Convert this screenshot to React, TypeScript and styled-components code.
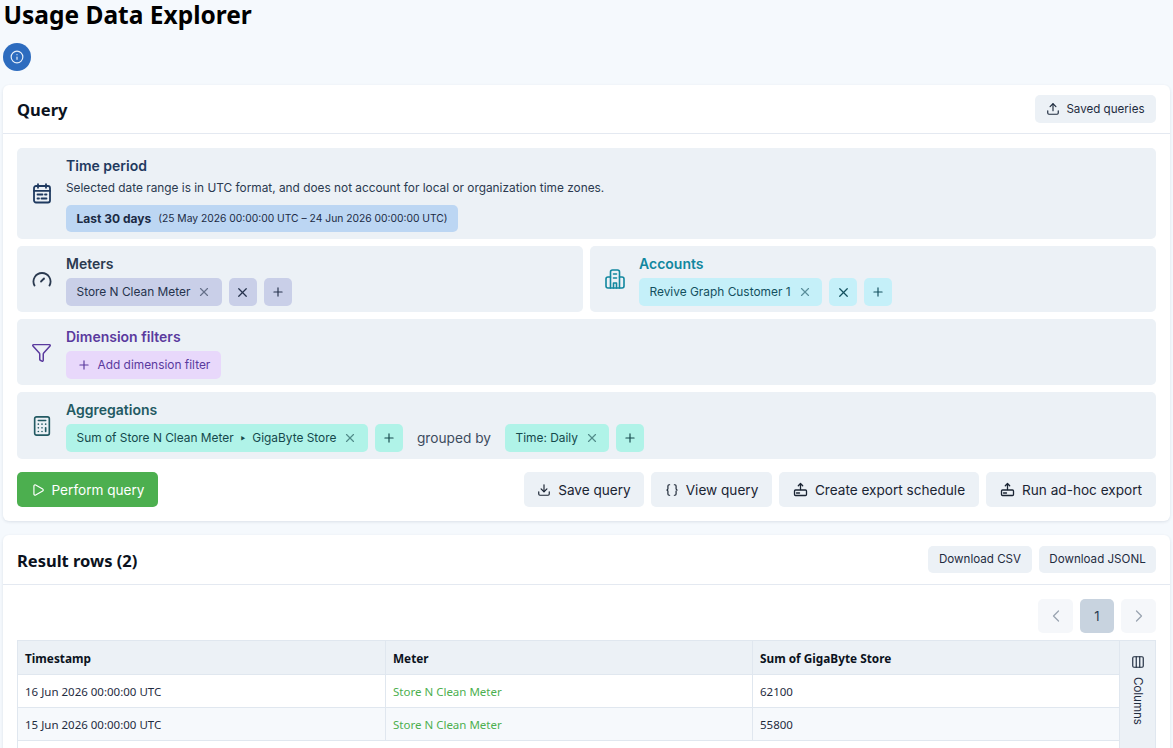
import React from "react";
import styled, { createGlobalStyle } from "styled-components";
import { Info, Upload, Funnel, Calculator, Play, Download, Braces, X, Plus, ChevronLeft, ChevronRight, Columns3 } from "lucide-react";

const Global = createGlobalStyle`
  html, body { margin: 0; padding: 0; height: 748px; overflow: hidden; background: #f5f9fd; }
  body { font-family: "Inter", "Noto Sans", sans-serif; color: #1a2433; }
`;

const Page = styled.div`
  display: flex;
  flex-direction: column;
  padding: 0 3px;
`;
const Title = styled.h1`
  margin: 0 0.5px 2px;
  font: 700 24.5px/30px "Noto Sans", sans-serif;
  color: #000;
`;
const InfoButton = styled.button`
  width: 28px;
  height: 28px;
  margin: 11px 0 14px;
  padding: 0;
  border: 0;
  border-radius: 50%;
  background: #2d6cbf;
  color: #e6effa;
  display: flex;
  align-items: center;
  justify-content: center;
`;
const Card = styled.section`
  background: #fff;
  border-radius: 6px;
  box-shadow: 0 1px 3px rgba(40, 60, 90, 0.12);
  margin-bottom: 14px;
`;
const CardHeader = styled.header<{ $h: number }>`
  height: ${(p) => p.$h}px;
  padding: 0 14px;
  border-bottom: 1px solid #e4e9f1;
  display: flex;
  align-items: center;
  justify-content: space-between;
`;
const CardTitle = styled.h2`
  margin: 2px 0 0;
  font: 700 16.5px/20px "Noto Sans", sans-serif;
  color: #0b1220;
`;
const CardBody = styled.div`
  padding: 14px;
  display: flex;
  flex-direction: column;
  gap: 7px;
`;
const Row = styled.div`
  display: grid;
  grid-template-columns: 1fr 1fr;
  gap: 7px;
`;
const Panel = styled.div`
  background: #ecf1f6;
  border-radius: 5px;
  display: flex;
  align-items: center;
`;
const PanelIcon = styled.div<{ $c: string }>`
  width: 49px;
  flex: none;
  display: flex;
  justify-content: center;
  color: ${(p) => p.$c};
`;
const PanelMain = styled.div<{ $pb?: number }>`
  display: flex;
  flex-direction: column;
  align-items: flex-start;
  padding: 9px 0 ${(p) => p.$pb ?? 6}px;
`;
const PanelTitle = styled.div<{ $c: string }>`
  font: 600 14px/18px "Inter", sans-serif;
  color: ${(p) => p.$c};
  margin-bottom: 5px;
`;
const Note = styled.div`
  font-size: 11.85px;
  line-height: 16px;
  color: #2b3a50;
  margin-bottom: 9px;
`;
const ChipRow = styled.div`
  display: flex;
  align-items: center;
  gap: 7px;
`;
const Chip = styled.div<{ $bg: string; $c: string; $square?: boolean; $h?: number }>`
  height: ${(p) => p.$h ?? 28}px;
  box-sizing: border-box;
  padding: ${(p) => (p.$square ? "0" : "0 10.5px 1px")};
  width: ${(p) => (p.$square ? "28px" : "auto")};
  justify-content: center;
  background: ${(p) => p.$bg};
  color: ${(p) => p.$c};
  border-radius: 5px;
  display: flex;
  align-items: center;
  gap: 7px;
  font-size: 11.9px;
  white-space: nowrap;
`;
const ChipX = styled(X)`
  opacity: 0.6;
`;
const RangeStrong = styled.strong`
  font-weight: 700;
  font-size: 12px;
  color: #1b2a44;
`;
const RangeText = styled.span`
  font-size: 10.3px;
  color: #1b2a44;
`;
const Caret = styled.span`
  font-size: 5px;
  margin: 0 2px;
`;
const ChipLabel = styled.span`
  display: flex;
  align-items: center;
  gap: 5px;
`;
const GroupedBy = styled.span`
  font-size: 13.7px;
  color: #3d4c5e;
  margin: 0 7px;
`;
const Actions = styled.div`
  display: flex;
  justify-content: space-between;
  margin-top: 6px;
`;
const ActionGroup = styled.div`
  display: flex;
  gap: 7px;
`;
const Primary = styled.button`
  height: 35px;
  width: 141px;
  border: 0;
  border-radius: 5px;
  background: #4caf4f;
  color: #fff;
  font: 400 13.6px "Inter", sans-serif;
  display: flex;
  align-items: center;
  justify-content: center;
  gap: 7px;
`;
const Secondary = styled.button<{ $w: number }>`
  height: 35px;
  width: ${(p) => p.$w}px;
  border: 0;
  border-radius: 5px;
  background: #ecf1f6;
  color: #1a2433;
  padding: 0;
  font: 400 13.6px "Inter", sans-serif;
  display: flex;
  align-items: center;
  justify-content: center;
  gap: 7px;
  white-space: nowrap;
`;
const SmallButton = styled.button<{ $w: number; $h: number }>`
  height: ${(p) => p.$h}px;
  width: ${(p) => p.$w}px;
  border: 0;
  border-radius: 5px;
  background: #ecf1f6;
  color: #1f2c3f;
  padding: 0 0 1px;
  font: 400 11.6px "Inter", sans-serif;
  display: flex;
  align-items: center;
  justify-content: center;
  gap: 6px;
  white-space: nowrap;
`;
const HeaderButtons = styled.div`
  display: flex;
  gap: 7px;
`;
const ResultsBody = styled.div`
  padding: 14px 14px 0;
  height: 300px;
`;
const Pager = styled.div`
  display: flex;
  justify-content: flex-end;
  gap: 7px;
  margin-bottom: 7px;
`;
const PageBtn = styled.div<{ $active?: boolean }>`
  width: ${(p) => (p.$active ? 34 : 35)}px;
  height: 34px;
  border-radius: 5px;
  background: ${(p) => (p.$active ? "#c8d3df" : "#f5f7fa")};
  color: ${(p) => (p.$active ? "#2b3a50" : "#9aa4b0")};
  display: flex;
  align-items: center;
  justify-content: center;
  font-size: 13px;
`;
const TableWrap = styled.div`
  display: flex;
  border: 1px solid #e0e7ef;
  box-sizing: border-box;
  height: 200px;
`;
const Table = styled.div`
  flex: 1;
  display: grid;
  grid-template-columns: 368px 367px 1fr;
  grid-template-rows: 34px 33px 33px;
  align-content: start;
`;
const Cell = styled.div<{ $head?: boolean; $alt?: boolean; $green?: boolean; $last?: boolean }>`
  display: flex;
  align-items: center;
  padding: ${(p) => (p.$head ? "1px 7px 0" : "0 7px")};
  box-sizing: border-box;
  border-bottom: 1px solid #e0e7ef;
  border-right: ${(p) => (p.$last ? "0" : "1px solid #e0e7ef")};
  background: ${(p) => (p.$head ? "#ecf1f6" : p.$alt ? "#f6f9fc" : "#fff")};
  font: ${(p) => (p.$head ? 700 : 400)} ${(p) => (p.$head ? 11.8 : 11.5)}px "Noto Sans", sans-serif;
  color: ${(p) => (p.$green ? "#4caf4f" : p.$head ? "#0b1220" : "#1f2c3f")};
`;
const ColumnsRail = styled.div`
  width: 36px;
  box-sizing: border-box;
  flex: none;
  background: #ecf1f6;
  border-left: 1px solid #e0e7ef;
  display: flex;
  flex-direction: column;
  align-items: center;
  padding-top: 14px;
  gap: 8px;
  color: #1f2c3f;
`;
const RailLabel = styled.span`
  writing-mode: vertical-rl;
  font-size: 11.5px;
`;

const CalendarIcon = () => (
  <svg width="20" height="21" viewBox="0 0 20 21" fill="none" stroke="currentColor" strokeWidth="1.8" strokeLinecap="round" strokeLinejoin="round">
    <rect x="2" y="3" width="16" height="16.5" rx="2" />
    <path d="M6 1.2v3.6M14 1.2v3.6M2 7.8h16" />
    <path d="M5.5 11.5h5M13 11.5h1.5M5.5 15.5h1.5M9.5 15.5h5" />
  </svg>
);
const GaugeIcon = () => (
  <svg width="20" height="16" viewBox="0 0 20 16" fill="none" stroke="currentColor" strokeWidth="1.8" strokeLinecap="round">
    <path d="M2.5 14.5a8.5 8.5 0 1 1 15 0" />
    <path d="M9 10.5l3-3" />
  </svg>
);
const BuildingIcon = () => (
  <svg width="22" height="22" viewBox="0 0 22 22" fill="none" stroke="currentColor" strokeWidth="1.6" strokeLinecap="round" strokeLinejoin="round">
    <path d="M6.5 20V4a2 2 0 0 1 2-2h5a2 2 0 0 1 2 2v16" />
    <path d="M6.5 9H4a2 2 0 0 0-2 2v7a2 2 0 0 0 2 2h14a2 2 0 0 0 2-2v-7a2 2 0 0 0-2-2h-2.5" />
    <path d="M9.5 6h3M9.5 10h3M9.5 20v-5h3v5" />
  </svg>
);
const ExportIcon = () => (
  <svg width="15" height="15" viewBox="0 0 15 15" fill="none" stroke="currentColor" strokeWidth="1.3" strokeLinecap="round" strokeLinejoin="round">
    <path d="M7.5 7.5V1.5M5.3 3.7l2.2-2.2 2.2 2.2" />
    <rect x="1.5" y="8" width="12" height="5.5" rx="1" />
    <path d="M3.5 11h3" />
  </svg>
);

const Chips = { meter: { $bg: "#c9cfe8", $c: "#26334d" }, account: { $bg: "#c5f0f9", $c: "#14505f" }, agg: { $bg: "#b0f3e8", $c: "#15494c" } };

export default function App() {
  return (
    <Page>
      <Global />
      <Title>Usage Data Explorer</Title>
      <InfoButton aria-label="Info"><Info size={14} /></InfoButton>
      <Card>
        <CardHeader $h={48}>
          <CardTitle>Query</CardTitle>
          <SmallButton $w={121} $h={28}><Upload size={14} />Saved queries</SmallButton>
        </CardHeader>
        <CardBody>
          <Panel>
            <PanelIcon $c="#1f3a60"><CalendarIcon /></PanelIcon>
            <PanelMain $pb={7}>
              <PanelTitle $c="#1f3a60">Time period</PanelTitle>
              <Note>Selected date range is in UTC format, and does not account for local or organization time zones.</Note>
              <Chip $bg="#bcd6f3" $c="#1b2a44" $h={27}>
                <RangeStrong>Last 30 days</RangeStrong>
                <RangeText>(25 May 2026 00:00:00 UTC – 24 Jun 2026 00:00:00 UTC)</RangeText>
              </Chip>
            </PanelMain>
          </Panel>
          <Row>
            <Panel>
              <PanelIcon $c="#2b3a50"><GaugeIcon /></PanelIcon>
              <PanelMain>
                <PanelTitle $c="#2b3a50">Meters</PanelTitle>
                <ChipRow>
                  <Chip {...Chips.meter}>Store N Clean Meter<ChipX size={14} /></Chip>
                  <Chip {...Chips.meter} $square><X size={15} /></Chip>
                  <Chip {...Chips.meter} $square><Plus size={14} /></Chip>
                </ChipRow>
              </PanelMain>
            </Panel>
            <Panel>
              <PanelIcon $c="#11879f"><BuildingIcon /></PanelIcon>
              <PanelMain>
                <PanelTitle $c="#11879f">Accounts</PanelTitle>
                <ChipRow>
                  <Chip {...Chips.account}>Revive Graph Customer 1<ChipX size={14} /></Chip>
                  <Chip {...Chips.account} $square><X size={15} /></Chip>
                  <Chip {...Chips.account} $square><Plus size={14} /></Chip>
                </ChipRow>
              </PanelMain>
            </Panel>
          </Row>
          <Panel>
            <PanelIcon $c="#5a3a9e"><Funnel size={21} strokeWidth={1.7} /></PanelIcon>
            <PanelMain>
              <PanelTitle $c="#5a3a9e">Dimension filters</PanelTitle>
              <Chip $bg="#e8d8fb" $c="#5a3a9e"><Plus size={14} />Add dimension filter</Chip>
            </PanelMain>
          </Panel>
          <Panel>
            <PanelIcon $c="#235a63"><Calculator size={22} strokeWidth={1.8} /></PanelIcon>
            <PanelMain $pb={7}>
              <PanelTitle $c="#235a63">Aggregations</PanelTitle>
              <ChipRow>
                <Chip {...Chips.agg}><ChipLabel>Sum of Store N Clean Meter<Caret>▶</Caret>GigaByte Store</ChipLabel><ChipX size={14} /></Chip>
                <Chip {...Chips.agg} $square><Plus size={14} /></Chip>
                <GroupedBy>grouped by</GroupedBy>
                <Chip {...Chips.agg}>Time: Daily<ChipX size={14} /></Chip>
                <Chip {...Chips.agg} $square><Plus size={14} /></Chip>
              </ChipRow>
            </PanelMain>
          </Panel>
          <Actions>
            <Primary><Play size={14} />Perform query</Primary>
            <ActionGroup>
              <Secondary $w={120}><Download size={14} />Save query</Secondary>
              <Secondary $w={121}><Braces size={14} />View query</Secondary>
              <Secondary $w={200}><ExportIcon />Create export schedule</Secondary>
              <Secondary $w={170}><ExportIcon />Run ad-hoc export</Secondary>
            </ActionGroup>
          </Actions>
        </CardBody>
      </Card>
      <Card>
        <CardHeader $h={49}>
          <CardTitle>Result rows (2)</CardTitle>
          <HeaderButtons>
            <SmallButton $w={104} $h={27}>Download CSV</SmallButton>
            <SmallButton $w={117} $h={27}>Download JSONL</SmallButton>
          </HeaderButtons>
        </CardHeader>
        <ResultsBody>
          <Pager>
            <PageBtn><ChevronLeft size={20} strokeWidth={1.5} /></PageBtn>
            <PageBtn $active>1</PageBtn>
            <PageBtn><ChevronRight size={20} strokeWidth={1.5} /></PageBtn>
          </Pager>
          <TableWrap>
            <Table>
              <Cell $head>Timestamp</Cell>
              <Cell $head>Meter</Cell>
              <Cell $head $last>Sum of GigaByte Store</Cell>
              <Cell>16 Jun 2026 00:00:00 UTC</Cell>
              <Cell $green>Store N Clean Meter</Cell>
              <Cell $last>62100</Cell>
              <Cell $alt>15 Jun 2026 00:00:00 UTC</Cell>
              <Cell $alt $green>Store N Clean Meter</Cell>
              <Cell $alt $last>55800</Cell>
            </Table>
            <ColumnsRail>
              <Columns3 size={14} />
              <RailLabel>Columns</RailLabel>
            </ColumnsRail>
          </TableWrap>
        </ResultsBody>
      </Card>
    </Page>
  );
}
